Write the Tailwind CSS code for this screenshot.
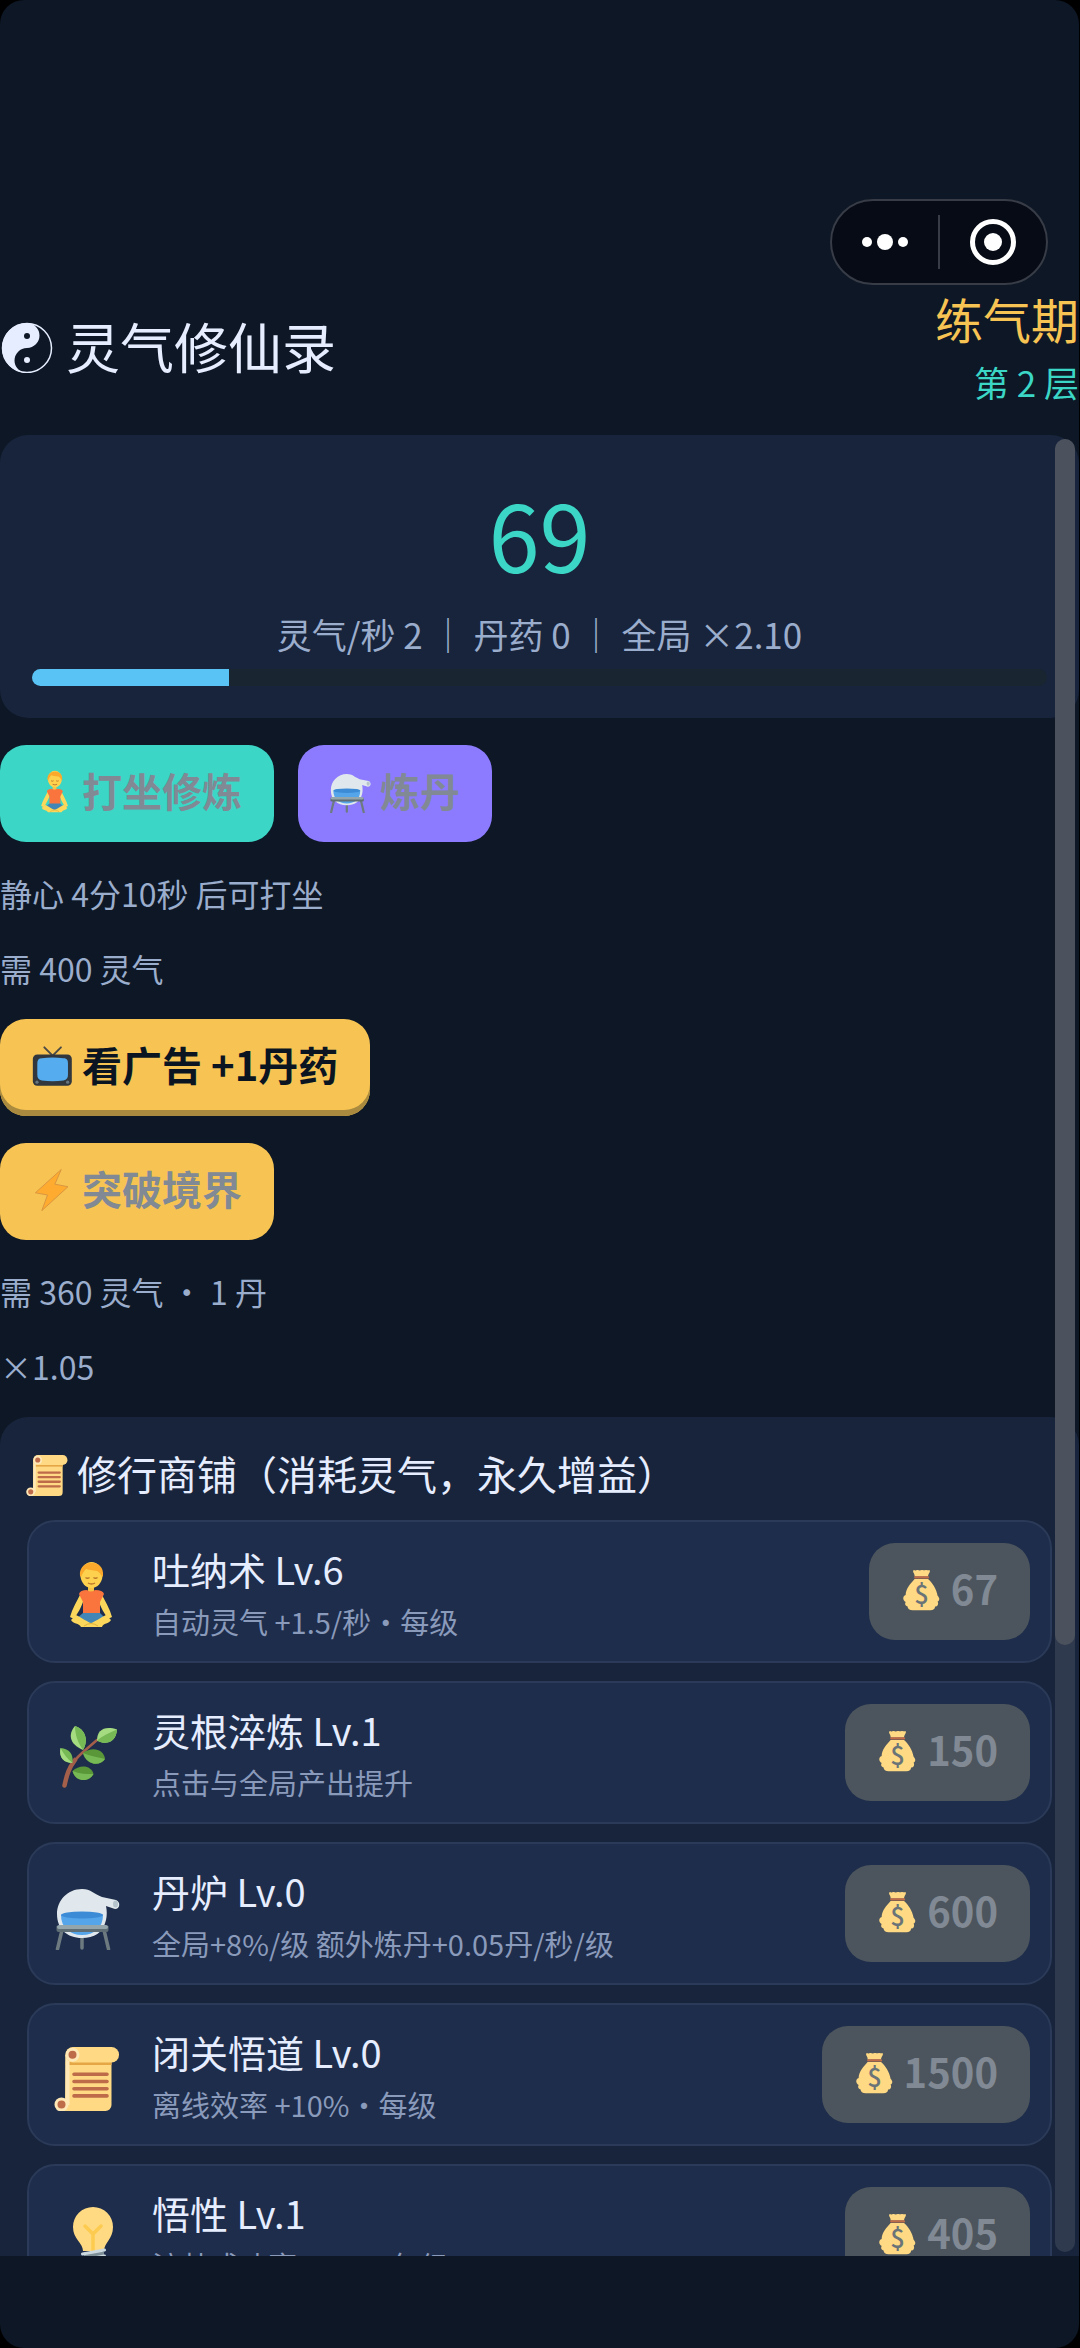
<!DOCTYPE html>
<html lang="zh-CN">

<head>
    <meta charset="UTF-8" />
    <meta name="viewport" content="width=device-width, initial-scale=1.0" />
    <title>灵气修仙录</title>
    <script src="https://cdn.jsdelivr.net/npm/@tailwindcss/browser@4"></script>
</head>

<body class="bg-black font-['Noto_Sans_CJK_SC',sans-serif] text-[#e6edff]">

    <!-- Icons -->
    <svg class="hidden" aria-hidden="true">
        <symbol id="lotus" viewBox="0 0 72 72">
            <path d="M30 37c-4 8-9 16-11 24l4 2c5-8 9-14 10-22zM50 37c4 8 9 16 11 24l-4 2c-5-8-9-14-10-22z" fill="#fbd75b" />
            <path d="M37 28h6v9h-6z" fill="#f5c244" />
            <path d="M28 38q1-4 8-4 4 3 8 0 8 0 9 4l-4 8v13H32V46z" fill="#fa743e" />
            <path d="M32 57h17l6 6-15 6-15-6z" fill="#4286b8" />
            <path d="M25 59c5 2 11 7 15 8 4-1 10-6 15-8l5 5c-2 4-8 3-9 7H30c-2-4-8-3-10-7z" fill="#fbd75b" />
            <path d="M33 70q7-5 14 0" stroke="#e0b23c" stroke-width="1" fill="none" />
            <ellipse cx="40.500" cy="19" rx="11" ry="13" fill="#fdd14e" />
            <path d="M29 20c-2-17 25-18 23 0l-1 1c-1-3-3-5-5-6-5-1-9-1-11-2-2 2-4 5-5 8z" fill="#fba92c" />
            <path d="M34.500 21.500q2 1.500 4 0M42.500 21.500q2 1.500 4 0M37 27q3.500 2 7 0" stroke="#b9752a" stroke-width="1.400" fill="none" />
        </symbol>
        <symbol id="retort" viewBox="0 0 72 72">
            <path d="M11 52 6.500 71M31 55v15M53 52l4.500 19" stroke="#6d7b80" stroke-width="3.500" stroke-linecap="round" />
            <path d="M31 11c9 0 12 5 20 8l14 3c5 2 4 9-1 9l-9-3c1 5 1 9 0 14-3 13-12 18-24 18C16 60 6 51 6 36 6 22 17 11 31 11z" fill="#e1e8ed" />
            <ellipse cx="64.500" cy="26" rx="2.500" ry="3.500" fill="#b5c3cc" />
            <path d="M10 37h42c0 12-8 20-21 20s-21-8-21-20z" fill="#55a5ea" />
            <ellipse cx="31" cy="37" rx="21" ry="3.500" fill="#3c8bd6" />
            <path d="M5.500 48h52v4a2 2 0 0 1-2 2h-48a2 2 0 0 1-2-2z" fill="#5f6e74" />
            <path d="M8 47h47a2 2 0 0 1 0 4H8a2 2 0 0 1 0-4z" fill="#94a5ac" />
        </symbol>
        <symbol id="scroll" viewBox="0 0 72 72">
            <path d="M14.500 16h46v50a6 6 0 0 1-6 6H10l4-6z" fill="#ffd983" />
            <path d="M14.500 23h46v3h-46z" fill="#e5a645" />
            <path d="M14.500 16h4v50h-4z" fill="#ffe8b6" />
            <rect x="14.500" y="8" width="53.500" height="15.500" rx="7.500" fill="#ffd983" />
            <circle cx="21.500" cy="15.700" r="7" fill="#ffe8b6" />
            <circle cx="21.500" cy="15.700" r="4" fill="#be6b49" />
            <circle cx="10.500" cy="65.500" r="7" fill="#ffe8b6" />
            <circle cx="10.500" cy="65.500" r="4" fill="#be6b49" />
            <path d="M23 35.300h33M23 42.500h33M23 49.700h33M23 56.900h33" stroke="#be6b49" stroke-width="3.600" stroke-linecap="round" />
        </symbol>
        <symbol id="herb" viewBox="0 0 72 72">
            <path d="M13.500 68.500C16 54 21 45 31 36L46 23" stroke="#a45f4a" stroke-width="2.500" stroke-linecap="round" fill="none" />
            <path d="M13.500 68.500C16 57 18 51 24 43" stroke="#a45f4a" stroke-width="4.500" stroke-linecap="round" fill="none" />
            <path d="M24 9c-7 8-6 18 8 24 6-10 2-21-8-24z" fill="#a6dc81" />
            <path d="M24 9c0 9 3 17 8 24 6-10 2-21-8-24z" fill="#76b955" />
            <path d="M66 12.500c-13-4-20 1-20 11 9 5 19 2 20-11z" fill="#a6dc81" />
            <path d="M66 12.500c-7 3-14 6-20 11 9 5 19 2 20-11z" fill="#76b955" />
            <path d="M9.500 31c-2 10 4 15 12 15 1-9-3-14-12-15z" fill="#76b955" />
            <path d="M9.500 31c-2 10 4 15 12 15-5-4-9-9-12-15z" fill="#a6dc81" />
            <path d="M54 42C53 32 41 29 32 36c3 12 17 14 22 6z" fill="#5a9739" />
            <path d="M54 42c-7-2-15-3-22-6 3 12 17 14 22 6z" fill="#76b955" />
            <path d="M42.500 57c-2-9-14-10-21-3 3 11 16 12 21 3z" fill="#5a9739" />
            <path d="M42.500 57c-7 0-14 0-21-3 3 11 16 12 21 3z" fill="#76b955" />
        </symbol>
        <symbol id="bulb" viewBox="0 0 72 72">
            <path d="M32 51c0-8-10-12-10-24a20 20 0 0 1 40 0c0 12-9 16-9 24z" fill="#ffda83" />
            <path d="M34 26l8 8 8-8M42 34v17" stroke="#fdcb4f" stroke-width="3.500" stroke-linecap="round" fill="none" />
            <path d="M33 52h20v9l-4 7h-12l-4-7z" fill="#7d8e96" />
            <path d="M31.500 54l22-4M31.500 60l22-4" stroke="#cbd8df" stroke-width="3" stroke-linecap="round" />
        </symbol>
        <symbol id="bag" viewBox="0 0 72 72">
            <path d="M26 18c1-4-5-8-1-10 3 2 4-1 6 0s4 1 6 0 4 1 6 0 4 1 6 0c3 2-2 6-2 10z" fill="#ffd983" />
            <path d="M26 22h21c7 6 13 16 15 26 4 4 3 8 0 9 2 4 0 8-4 8 0 4-3 6-7 6H23c-5 0-8-3-8-6-5-2-4-5-3-7-5-3-5-9 0-11 0-10 8-18 14-25z" fill="#ffd983" />
            <path d="M27 19.500h20" stroke="#be6b49" stroke-width="3.500" stroke-linecap="round" />
            <text x="37" y="61" text-anchor="middle" font-size="40" font-weight="500" fill="#6a7478">$</text>
        </symbol>
        <symbol id="tv" viewBox="0 0 72 72">
            <path d="M24 10l13 13 13-13" stroke="#4b4a45" stroke-width="3" stroke-linecap="round" fill="none" />
            <rect x="6" y="21" width="61" height="49" rx="7" fill="#31373d" />
            <path d="M20 27q17-2 34 0c6 0 7 4 7 8v18c0 5-2 8-7 9q-17 2-34 0c-5-1-7-4-7-9V35c0-5 2-8 7-8z" fill="#55acee" />
            <circle cx="12.500" cy="64.500" r="2.500" fill="#66757f" />
            <circle cx="60.500" cy="64.500" r="2.500" fill="#66757f" />
        </symbol>
        <symbol id="bolt" viewBox="0 0 72 72">
            <path d="M50.500 7 40.500 30 61 34 20 71.500 29 47 10 43.500z" fill="#ffab30" stroke="#d8943f" stroke-width="1.500" stroke-linejoin="round" />
        </symbol>
    </svg>

    <div class="relative h-screen flex flex-col bg-[#0d1725] rounded-3xl mr-px pt-[282px] pb-[92px]">

        <!-- Mini program capsule -->
        <div class="absolute top-[199px] right-[31px] flex items-center w-[218px] h-[86px] rounded-full border-2 border-[#373c46] bg-[#060b15]">
            <button class="flex-1 flex items-center justify-center gap-[5px]" aria-label="更多">
                <span class="size-[10px] rounded-full bg-white"></span>
                <span class="size-4 rounded-full bg-white"></span>
                <span class="size-[10px] rounded-full bg-white"></span>
            </button>
            <span class="w-[2px] h-[54px] bg-[#373c46]"></span>
            <button class="flex-1 flex items-center justify-center" aria-label="关闭">
                <span class="flex items-center justify-center size-[46px] rounded-full border-5 border-white">
                    <span class="size-[18px] rounded-full bg-white"></span>
                </span>
            </button>
        </div>

        <!-- Header -->
        <header class="flex items-center justify-between mb-[25px]">
            <h1 class="flex items-center gap-3 text-[54px] leading-[72px]">
                <svg class="size-[54px]" viewBox="0 0 54 54" aria-hidden="true">
                    <circle cx="27" cy="29" r="24.500" fill="none" stroke="#e6edff" stroke-width="1.500" />
                    <path d="M27 4a25 25 0 0 0 0 50 12.500 12.500 0 0 1 0-25 12.500 12.500 0 0 0 0-25z" fill="#e6edff" />
                    <circle cx="27" cy="17" r="3" fill="#0d1725" />
                    <circle cx="27" cy="41" r="3" fill="#e6edff" />
                </svg>
                灵气修仙录
            </h1>
            <div class="text-right">
                <p class="text-[48px] leading-[72px] text-[#f7c454]">练气期</p>
                <p class="text-[35px] leading-[56px] text-[#3bd6c6]">第 2 层</p>
            </div>
        </header>

        <!-- Scroll area -->
        <main class="relative flex-1 min-h-0 overflow-hidden">
            <div class="flex flex-col gap-[27px]">

                <section class="rounded-[28px] bg-[#18243b] px-8 py-8 text-center">
                    <p class="text-[92px] leading-[132px] text-[#3bd6c6]">69</p>
                    <p class="my-[10px] text-[35px] leading-[50px] text-[#9badcc]">灵气/秒 2 ｜ 丹药 0 ｜ 全局 ×2.10</p>
                    <div class="h-[17px] rounded-full bg-[#192530] overflow-hidden">
                        <div class="h-full bg-[#5ac3f5]" style="width: 19.400%"></div>
                    </div>
                </section>

                <div class="flex gap-6 text-[40px] leading-[60px] font-bold text-[#808994]">
                    <button class="flex items-center gap-[7px] h-[97px] px-8 pb-2 rounded-[26px] bg-[#3bd6c6]" disabled>
                        <svg class="size-[46px] -ml-[3px]"><use href="#lotus" /></svg>打坐修炼
                    </button>
                    <button class="flex items-center gap-[7px] h-[97px] px-8 pb-2 rounded-[26px] bg-[#8c7bff]" disabled>
                        <svg class="size-[46px] -ml-[3px]"><use href="#retort" /></svg>炼丹
                    </button>
                </div>
                <p class="text-[32px] leading-[48px] text-[#9badcc]">静心 4分10秒 后可打坐</p>
                <p class="text-[32px] leading-[48px] text-[#9badcc]">需 400 灵气</p>

                <button class="self-start flex items-center gap-[7px] h-[97px] px-8 pb-2 rounded-[26px] bg-[#f7c454] shadow-[inset_0_-6px_0_#a98a3e] text-[40px] leading-[60px] font-bold text-[#0b1522]">
                    <svg class="size-[46px] -ml-[3px]"><use href="#tv" /></svg>看广告 +1丹药
                </button>
                <button class="self-start flex items-center gap-[7px] h-[97px] px-8 pb-2 rounded-[26px] bg-[#f7c454] text-[40px] leading-[60px] font-bold text-[#808994]" disabled>
                    <svg class="size-[46px] -ml-[3px]"><use href="#bolt" /></svg>突破境界
                </button>
                <p class="text-[32px] leading-[48px] text-[#9badcc]">需 360 灵气 · 1 丹</p>
                <p class="text-[32px] leading-[48px] text-[#9badcc]">×1.05</p>

                <!-- Shop -->
                <section class="rounded-[28px] bg-[#18243b] px-[27px] py-[26px]">
                    <h2 class="flex items-center gap-[7px] mb-[17px] text-[40px] leading-[60px]">
                        <svg class="size-[46px] -ml-[3px]"><use href="#scroll" /></svg>修行商铺（消耗灵气，永久增益）
                    </h2>
                    <ul class="flex flex-col gap-[18px]">
                        <li class="flex items-center h-[143px] pl-[22px] pr-5 rounded-[28px] border-2 border-[#2a3a58] bg-[#1e2d4b]">
                            <svg class="size-[72px] mr-[29px]"><use href="#lotus" /></svg>
                            <div class="flex-1">
                                <h3 class="mb-1 text-[38px] leading-[54px]">吐纳术 Lv.6</h3>
                                <p class="text-[29px] leading-[42px] text-[#8a9abb]">自动灵气 +1.5/秒·每级</p>
                            </div>
                            <button class="flex items-center gap-[7px] h-[97px] px-8 pb-2 rounded-[26px] bg-[#4c555d] text-[40px] font-bold text-[#808994]" disabled>
                                <svg class="size-[46px] -ml-[3px]"><use href="#bag" /></svg>67
                            </button>
                        </li>
                        <li class="flex items-center h-[143px] pl-[22px] pr-5 rounded-[28px] border-2 border-[#2a3a58] bg-[#1e2d4b]">
                            <svg class="size-[72px] mr-[29px]"><use href="#herb" /></svg>
                            <div class="flex-1">
                                <h3 class="mb-1 text-[38px] leading-[54px]">灵根淬炼 Lv.1</h3>
                                <p class="text-[29px] leading-[42px] text-[#8a9abb]">点击与全局产出提升</p>
                            </div>
                            <button class="flex items-center gap-[7px] h-[97px] px-8 pb-2 rounded-[26px] bg-[#4c555d] text-[40px] font-bold text-[#808994]" disabled>
                                <svg class="size-[46px] -ml-[3px]"><use href="#bag" /></svg>150
                            </button>
                        </li>
                        <li class="flex items-center h-[143px] pl-[22px] pr-5 rounded-[28px] border-2 border-[#2a3a58] bg-[#1e2d4b]">
                            <svg class="size-[72px] mr-[29px]"><use href="#retort" /></svg>
                            <div class="flex-1">
                                <h3 class="mb-1 text-[38px] leading-[54px]">丹炉 Lv.0</h3>
                                <p class="text-[29px] leading-[42px] text-[#8a9abb]">全局+8%/级 额外炼丹+0.05丹/秒/级</p>
                            </div>
                            <button class="flex items-center gap-[7px] h-[97px] px-8 pb-2 rounded-[26px] bg-[#4c555d] text-[40px] font-bold text-[#808994]" disabled>
                                <svg class="size-[46px] -ml-[3px]"><use href="#bag" /></svg>600
                            </button>
                        </li>
                        <li class="flex items-center h-[143px] pl-[22px] pr-5 rounded-[28px] border-2 border-[#2a3a58] bg-[#1e2d4b]">
                            <svg class="size-[72px] mr-[29px]"><use href="#scroll" /></svg>
                            <div class="flex-1">
                                <h3 class="mb-1 text-[38px] leading-[54px]">闭关悟道 Lv.0</h3>
                                <p class="text-[29px] leading-[42px] text-[#8a9abb]">离线效率 +10%·每级</p>
                            </div>
                            <button class="flex items-center gap-[7px] h-[97px] px-8 pb-2 rounded-[26px] bg-[#4c555d] text-[40px] font-bold text-[#808994]" disabled>
                                <svg class="size-[46px] -ml-[3px]"><use href="#bag" /></svg>1500
                            </button>
                        </li>
                        <li class="flex items-center h-[143px] pl-[22px] pr-5 rounded-[28px] border-2 border-[#2a3a58] bg-[#1e2d4b]">
                            <svg class="size-[72px] mr-[29px]"><use href="#bulb" /></svg>
                            <div class="flex-1">
                                <h3 class="mb-1 text-[38px] leading-[54px]">悟性 Lv.1</h3>
                                <p class="text-[29px] leading-[42px] text-[#8a9abb]">渡劫成功率 +2%·每级</p>
                            </div>
                            <button class="flex items-center gap-[7px] h-[97px] px-8 pb-2 rounded-[26px] bg-[#4c555d] text-[40px] font-bold text-[#808994]" disabled>
                                <svg class="size-[46px] -ml-[3px]"><use href="#bag" /></svg>405
                            </button>
                        </li>
                    </ul>
                </section>
            </div>

            <!-- Scrollbar -->
            <div class="absolute top-1 bottom-1 right-1 w-5 rounded-full bg-white/10">
                <div class="w-full rounded-full bg-[#4c525d]" style="height: 66.500%"></div>
            </div>
        </main>
    </div>

</body>

</html>
